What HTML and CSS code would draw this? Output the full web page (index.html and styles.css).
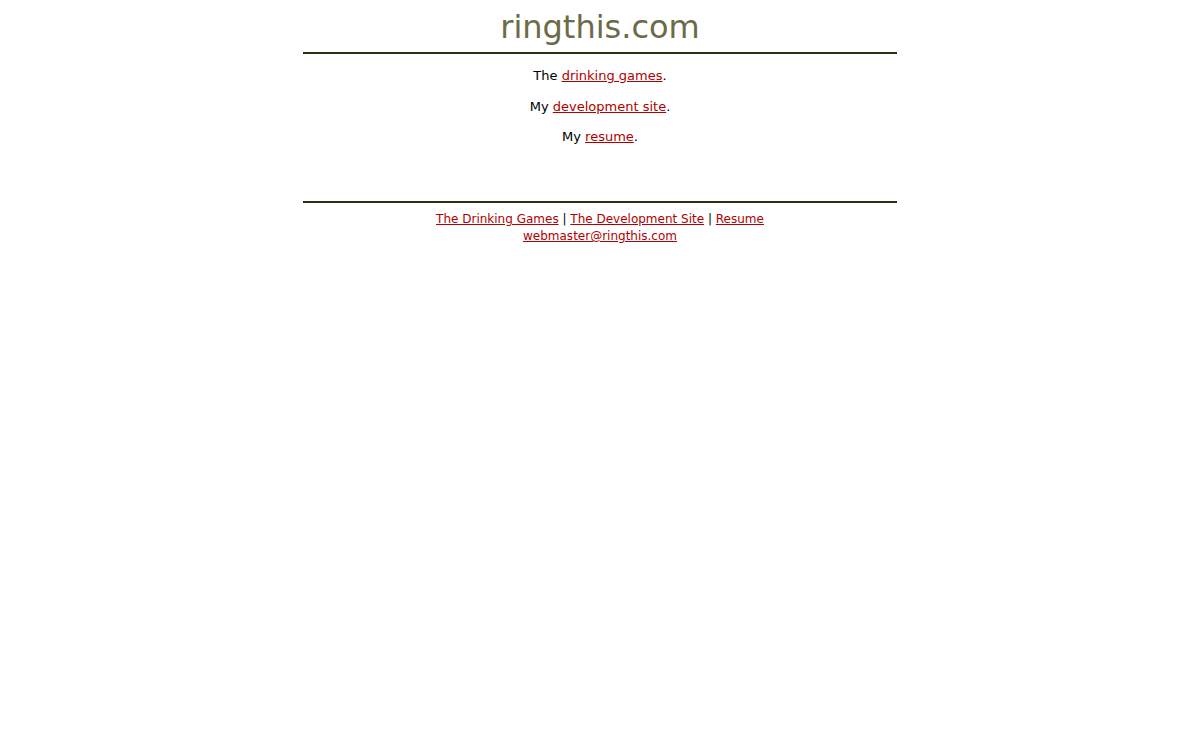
FILE: index.html
```html
<!DOCTYPE html>
<html>
<head>
<meta charset="utf-8">
<title>ringthis.com</title>
<link rel="stylesheet" href="styles.css">
</head>
<body>
<div class="page">
  <h1 class="title">ringthis.com</h1>
  <div class="content">
    <p>The <a href="#">drinking games</a>.</p>
    <p>My <a href="#">development site</a>.</p>
    <p>My <a href="#">resume</a>.</p>
  </div>
  <div class="footer">
    <div><a href="#">The Drinking Games</a> | <a href="#">The Development Site</a> | <a href="#">Resume</a></div>
    <div><a href="#">webmaster@ringthis.com</a></div>
  </div>
</div>
</body>
</html>
```
FILE: styles.css
```css
html, body {
  margin: 0;
  padding: 0;
  background: #ffffff;
}
body {
  font-family: "DejaVu Sans", Verdana, sans-serif;
  color: #000000;
}
.page {
  width: 594px;
  margin: 0 auto;
  text-align: center;
}
.title {
  margin: 0;
  padding-top: 7px;
  font-size: 32px;
  font-weight: normal;
  line-height: 40px;
  color: #6b6b47;
  border-bottom: 2px solid #2e2e17;
  padding-bottom: 5px;
}
.content {
  padding-top: 14px;
  padding-bottom: 56px;
  border-bottom: 2px solid #2e2e17;
}
.content p {
  margin: 0 0 14.5px 0;
  font-size: 13px;
  line-height: 16px;
}
.content p:last-child {
  margin-bottom: 0;
}
a {
  color: #b00000;
}
.footer {
  padding-top: 8px;
  font-size: 12px;
  line-height: 17px;
}
```
